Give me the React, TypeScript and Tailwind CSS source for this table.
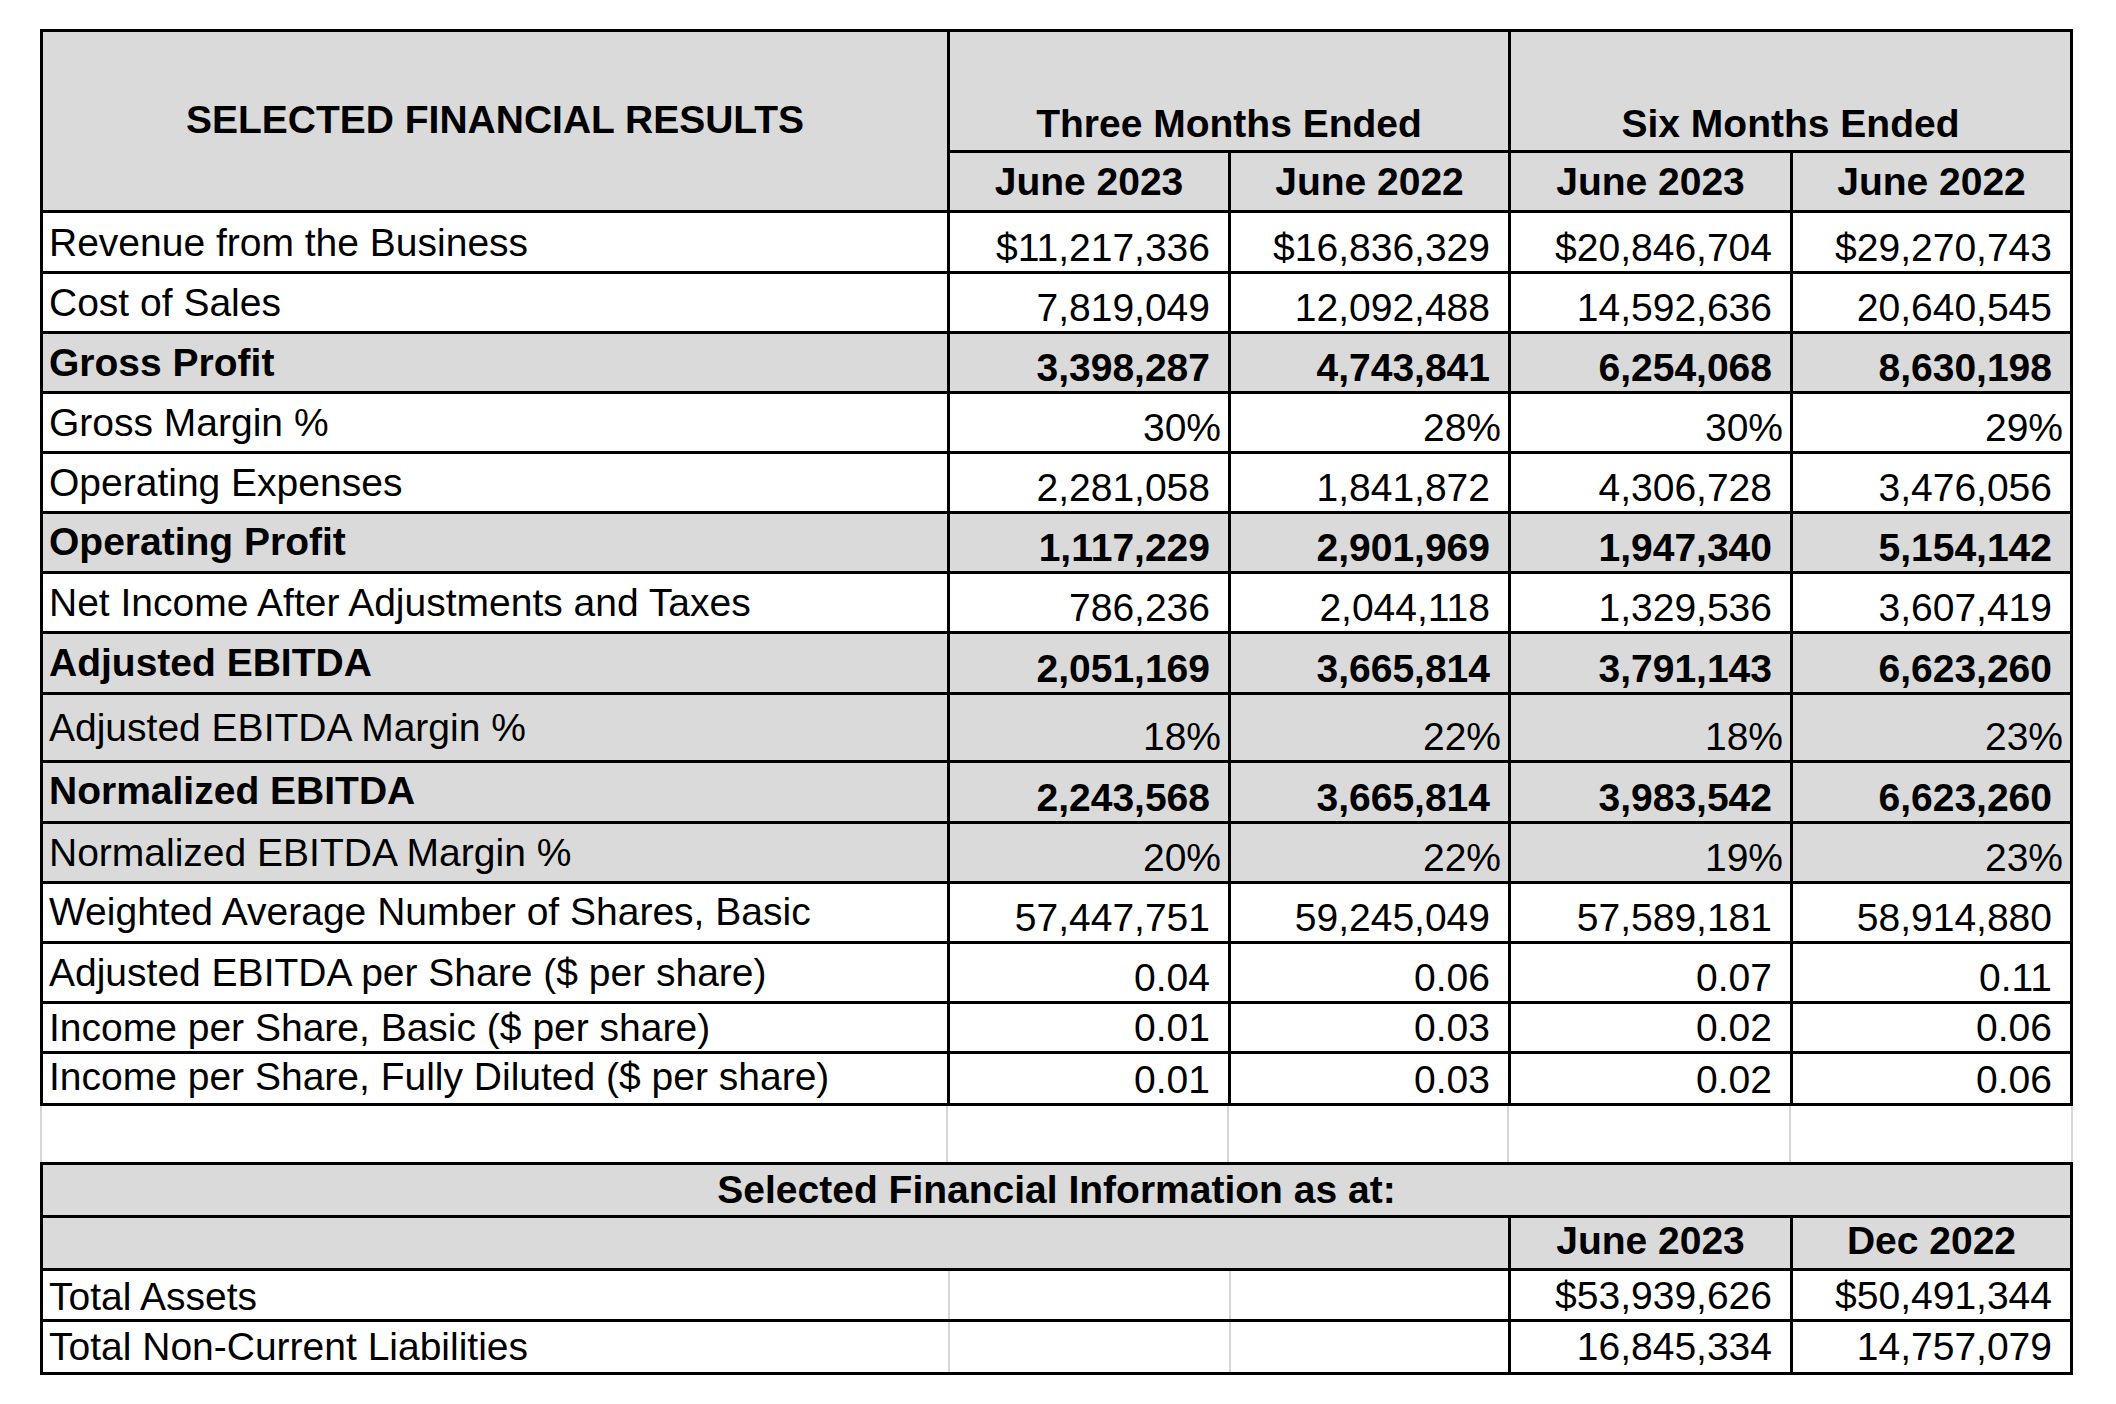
import React from "react";

type Row = {
  label: string;
  values: string[];
  h: string;
  lp: string;
  bold?: boolean;
  grey?: boolean;
  pct?: boolean;
  last?: boolean;
};

const rows: Row[] = [
  { label: "Revenue from the Business", values: ["$11,217,336", "$16,836,329", "$20,846,704", "$29,270,743"], h: "h-[61px]", lp: "pt-[10px]" },
  { label: "Cost of Sales", values: ["7,819,049", "12,092,488", "14,592,636", "20,640,545"], h: "h-[60px]", lp: "pt-[9px]" },
  { label: "Gross Profit", values: ["3,398,287", "4,743,841", "6,254,068", "8,630,198"], h: "h-[60px]", lp: "pt-[9px]", bold: true, grey: true },
  { label: "Gross Margin %", values: ["30%", "28%", "30%", "29%"], h: "h-[60px]", lp: "pt-[9px]", pct: true },
  { label: "Operating Expenses", values: ["2,281,058", "1,841,872", "4,306,728", "3,476,056"], h: "h-[60px]", lp: "pt-[9px]" },
  { label: "Operating Profit", values: ["1,117,229", "2,901,969", "1,947,340", "5,154,142"], h: "h-[60px]", lp: "pt-[8px]", bold: true, grey: true },
  { label: "Net Income After Adjustments and Taxes", values: ["786,236", "2,044,118", "1,329,536", "3,607,419"], h: "h-[60px]", lp: "pt-[9px]" },
  { label: "Adjusted EBITDA", values: ["2,051,169", "3,665,814", "3,791,143", "6,623,260"], h: "h-[61px]", lp: "pt-[9px]", bold: true, grey: true },
  { label: "Adjusted EBITDA Margin %", values: ["18%", "22%", "18%", "23%"], h: "h-[68px]", lp: "pt-[13px]", grey: true, pct: true },
  { label: "Normalized EBITDA", values: ["2,243,568", "3,665,814", "3,983,542", "6,623,260"], h: "h-[61px]", lp: "pt-[8px]", bold: true, grey: true },
  { label: "Normalized EBITDA Margin %", values: ["20%", "22%", "19%", "23%"], h: "h-[60px]", lp: "pt-[9px]", grey: true, pct: true },
  { label: "Weighted Average Number of Shares, Basic", values: ["57,447,751", "59,245,049", "57,589,181", "58,914,880"], h: "h-[60px]", lp: "pt-[8px]" },
  { label: "Adjusted EBITDA per Share ($ per share)", values: ["0.04", "0.06", "0.07", "0.11"], h: "h-[60px]", lp: "pt-[9px]" },
  { label: "Income per Share, Basic ($ per share)", values: ["0.01", "0.03", "0.02", "0.06"], h: "h-[50px]", lp: "pt-[4px]" },
  { label: "Income per Share, Fully Diluted ($ per share)", values: ["0.01", "0.03", "0.02", "0.06"], h: "h-[49px]", lp: "pt-[3px]", last: true },
];

// value column widths, border included
const valueCols = ["w-[281px] border-r-[3px]", "w-[280px] border-r-[3px]", "w-[282px] border-r-[3px]", "w-[277px]"];

function DataRow({ row }: { row: Row }) {
  return (
    <div
      className={`flex ${row.h} border-black ${row.last ? "" : "border-b-[3px]"} ${row.grey ? "bg-[#d9dad9]" : "bg-white"} ${row.bold ? "font-bold" : ""}`}
    >
      <div className={`w-[907px] border-r-[3px] border-black flex items-start pl-[6px] ${row.lp}`}>
        <span className="whitespace-nowrap">{row.label}</span>
      </div>
      {row.values.map((v, i) => (
        <div
          key={i}
          className={`${valueCols[i]} border-black flex items-end justify-end pb-[3px] ${row.pct ? "pr-[7px]" : "pr-[18px]"}`}
        >
          <span className="whitespace-nowrap">{v}</span>
        </div>
      ))}
    </div>
  );
}

export default function App() {
  return (
    <div className="w-[2116px] h-[1404px] bg-white pt-[29px] text-black text-[39px] leading-[40px] font-['Liberation_Sans',Arial,sans-serif]">
      {/* main results table */}
      <div className="ml-[40px] w-[2033px] border-[3px] border-black">
        <div className="flex h-[181px] border-b-[3px] border-black bg-[#d9dad9] font-bold">
          <div className="w-[907px] border-r-[3px] border-black flex items-center justify-center pb-[2px]">
            <span className="whitespace-nowrap">SELECTED FINANCIAL RESULTS</span>
          </div>
          <div className="flex flex-col w-[1120px]">
            <div className="flex h-[121px] border-b-[3px] border-black">
              <div className="w-[561px] border-r-[3px] border-black flex items-end justify-center pb-[6px]">
                <span className="whitespace-nowrap">Three Months Ended</span>
              </div>
              <div className="w-[559px] flex items-end justify-center pb-[6px]">
                <span className="whitespace-nowrap">Six Months Ended</span>
              </div>
            </div>
            <div className="flex flex-1">
              {["June 2023", "June 2022", "June 2023", "June 2022"].map((t, i) => (
                <div key={i} className={`${valueCols[i]} border-black flex items-center justify-center`}>
                  <span className="whitespace-nowrap">{t}</span>
                </div>
              ))}
            </div>
          </div>
        </div>
        {rows.map((r) => (
          <DataRow key={r.label} row={r} />
        ))}
      </div>

      {/* empty spreadsheet row */}
      <div className="ml-[40px] w-[2033px] h-[56px] flex border-x-2 border-[#d6d6d6]">
        <div className="w-[906px] border-r-2 border-[#d6d6d6]" />
        <div className="w-[281px] border-r-2 border-[#d6d6d6]" />
        <div className="w-[280px] border-r-2 border-[#d6d6d6]" />
        <div className="w-[282px] border-r-2 border-[#d6d6d6]" />
        <div className="flex-1" />
      </div>

      {/* balance sheet table */}
      <div className="ml-[40px] w-[2033px] border-[3px] border-black">
        <div className="h-[53px] border-b-[3px] border-black bg-[#d9dad9] font-bold flex items-center justify-center">
          <span className="whitespace-nowrap">Selected Financial Information as at:</span>
        </div>
        <div className="flex h-[53px] border-b-[3px] border-black bg-[#d9dad9] font-bold">
          <div className="w-[1468px] border-r-[3px] border-black" />
          <div className="w-[282px] border-r-[3px] border-black flex items-center justify-center pb-[4px]">
            <span className="whitespace-nowrap">June 2023</span>
          </div>
          <div className="w-[277px] flex items-center justify-center pb-[4px]">
            <span className="whitespace-nowrap">Dec 2022</span>
          </div>
        </div>
        {[
          { label: "Total Assets", a: "$53,939,626", b: "$50,491,344", h: "h-[51px] border-b-[3px]", lp: "pt-[6px]", vp: "pb-[3px]" },
          { label: "Total Non-Current Liabilities", a: "16,845,334", b: "14,757,079", h: "h-[50px]", lp: "pt-[5px]", vp: "pb-[5px]" },
        ].map((r) => (
          <div key={r.label} className={`flex ${r.h} border-black`}>
            <div className={`w-[907px] border-r-2 border-[#d6d6d6] flex items-start pl-[6px] ${r.lp}`}>
              <span className="whitespace-nowrap">{r.label}</span>
            </div>
            <div className="w-[281px] border-r-2 border-[#d6d6d6]" />
            <div className="w-[280px] border-r-[3px] border-black" />
            <div className={`w-[282px] border-r-[3px] border-black flex items-end justify-end pr-[18px] ${r.vp}`}>
              <span className="whitespace-nowrap">{r.a}</span>
            </div>
            <div className={`w-[277px] flex items-end justify-end pr-[18px] ${r.vp}`}>
              <span className="whitespace-nowrap">{r.b}</span>
            </div>
          </div>
        ))}
      </div>
    </div>
  );
}
